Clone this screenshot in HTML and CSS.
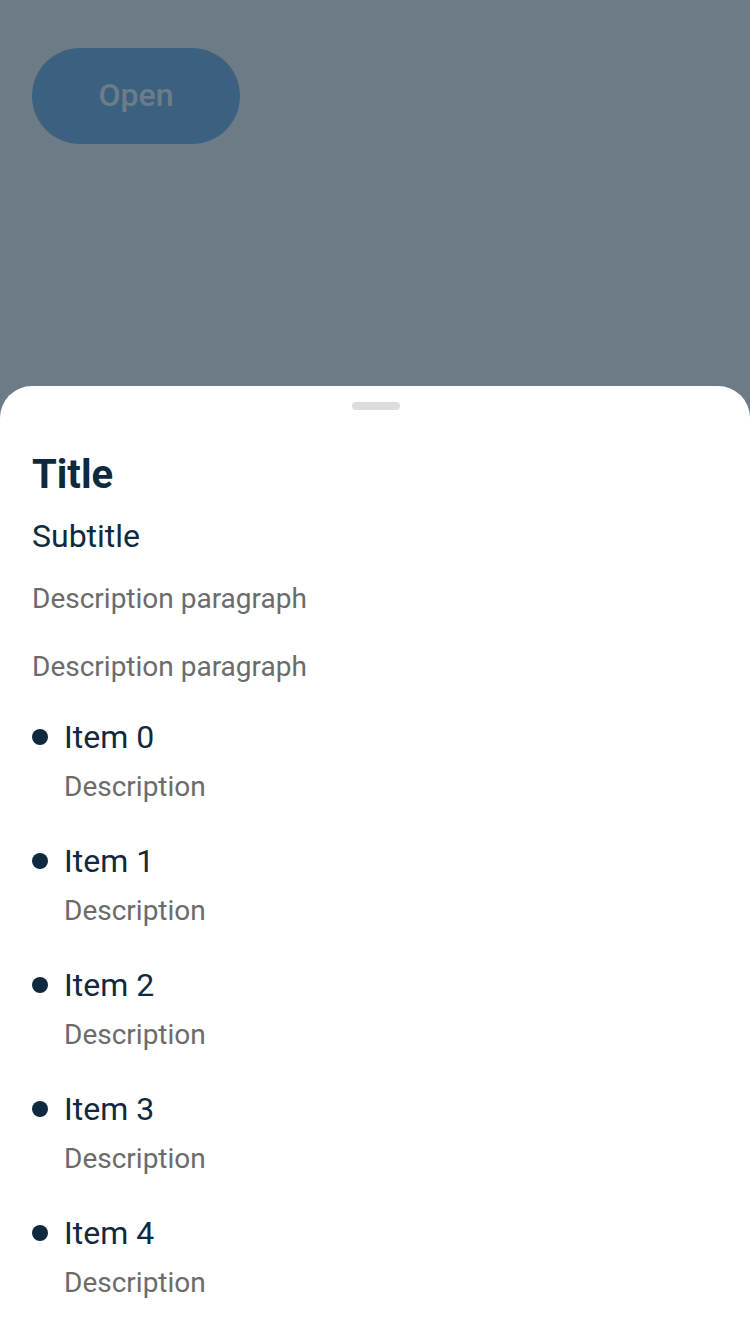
FILE: index.html
```html
<!DOCTYPE html>
<html lang="en">
<head>
<meta charset="utf-8">
<title>Bottom sheet</title>
<link rel="stylesheet" href="styles.css">
</head>
<body>
<div class="screen">
  <div class="backdrop">
    <button class="open-btn" type="button">Open</button>
  </div>
  <div class="sheet">
    <div class="handle"></div>
    <h1 class="title">Title</h1>
    <h2 class="subtitle">Subtitle</h2>
    <p class="para para-first">Description paragraph</p>
    <p class="para">Description paragraph</p>
    <ul class="items">
      <li class="item"><span class="dot"></span><div class="item-body"><div class="item-name">Item 0</div><div class="item-desc">Description</div></div></li>
      <li class="item"><span class="dot"></span><div class="item-body"><div class="item-name">Item 1</div><div class="item-desc">Description</div></div></li>
      <li class="item"><span class="dot"></span><div class="item-body"><div class="item-name">Item 2</div><div class="item-desc">Description</div></div></li>
      <li class="item"><span class="dot"></span><div class="item-body"><div class="item-name">Item 3</div><div class="item-desc">Description</div></div></li>
      <li class="item"><span class="dot"></span><div class="item-body"><div class="item-name">Item 4</div><div class="item-desc">Description</div></div></li>
    </ul>
  </div>
</div>
</body>
</html>
```

FILE: styles.css
```css
* { box-sizing: border-box; }
html, body {
  margin: 0;
  padding: 0;
  background: #6c7b85;
  font-family: Roboto, "Noto Sans", sans-serif;
}
.screen {
  width: 750px;
  height: 1334px;
  display: flex;
  flex-direction: column;
  overflow: hidden;
}
.backdrop {
  height: 386px;
  flex: 0 0 386px;
  padding: 48px 32px 0;
}
.open-btn {
  width: 208px;
  height: 96px;
  border: none;
  border-radius: 48px;
  background: #3c6180;
  color: #6b7d89;
  font-family: Roboto, sans-serif;
  font-weight: 500;
  font-size: 32px;
  line-height: 40px;
  padding: 0 0 3px;
}
.sheet {
  flex: 1;
  background: #ffffff;
  border-radius: 32px 32px 0 0;
  padding: 16px 32px 0;
  display: flex;
  flex-direction: column;
}
.handle {
  align-self: center;
  width: 48px;
  height: 8px;
  margin-left: 2px;
  border-radius: 4px;
  background: #dcdcdc;
}
.title {
  margin: 41px 0 0;
  font-size: 40px;
  line-height: 48px;
  font-weight: 700;
  color: #0f2a3e;
}
.subtitle {
  margin: 17px 0 0;
  font-size: 32px;
  line-height: 40px;
  font-weight: 400;
  color: #0f2a3e;
}
.para {
  margin: 32px 0 0;
  font-size: 28px;
  line-height: 36px;
  color: #6b6b6b;
}
.para-first { margin-top: 25px; }
.items {
  list-style: none;
  margin: 32px 0 0;
  padding: 0;
  display: flex;
  flex-direction: column;
  gap: 36px;
}
.item {
  display: flex;
  align-items: flex-start;
  gap: 16px;
}
.dot {
  flex: 0 0 16px;
  width: 16px;
  height: 16px;
  border-radius: 50%;
  background: #0f2a3e;
  margin-top: 12px;
}
.item-body {
  display: flex;
  flex-direction: column;
  gap: 12px;
}
.item-name {
  font-size: 32px;
  line-height: 40px;
  color: #0f2a3e;
}
.item-desc {
  font-size: 28px;
  line-height: 36px;
  color: #6b6b6b;
}
```
